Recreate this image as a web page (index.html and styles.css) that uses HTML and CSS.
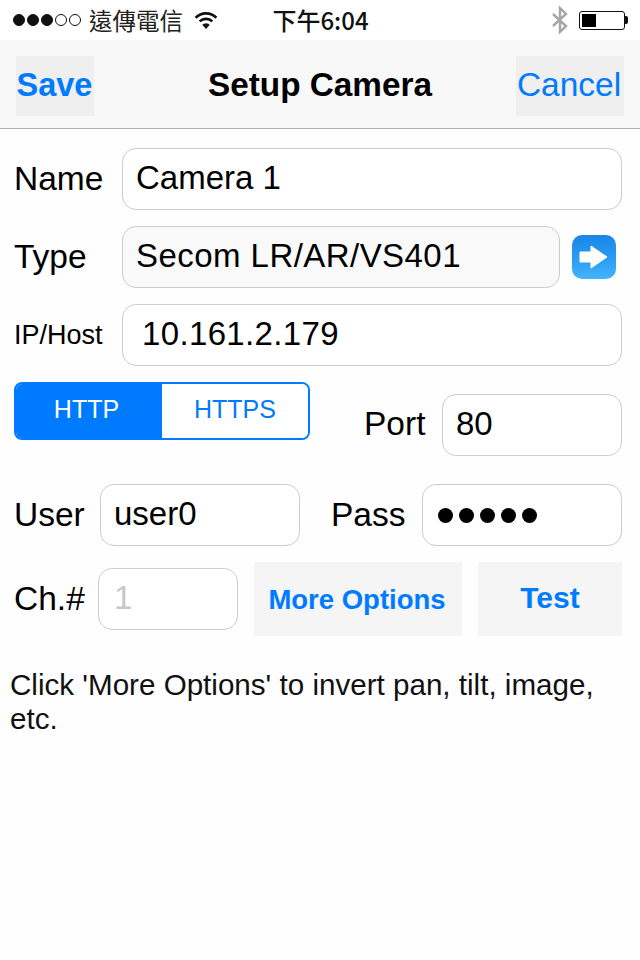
FILE: index.html
```html
<!DOCTYPE html>
<html lang="en">
<head>
    <meta charset="UTF-8">
    <meta name="viewport" content="width=device-width, initial-scale=1.0">
    <title>Setup Camera</title>
    <link rel="stylesheet" href="styles.css">
</head>
<body>
    <div class="status-bar">
        <div class="status-left">
            <span class="signal">
                <i class="dot on"></i><i class="dot on"></i><i class="dot on"></i><i class="dot"></i><i class="dot"></i>
            </span>
            <span class="carrier">遠傳電信</span>
            <svg class="wifi" width="24" height="18" viewBox="0 0 26 20">
                <path d="M1.5 7.5 A16 16 0 0 1 24.5 7.5" fill="none" stroke="#111" stroke-width="3"/>
                <path d="M6 11.5 A10 10 0 0 1 20 11.5" fill="none" stroke="#111" stroke-width="3"/>
                <path d="M13 20 L8.8 15.2 A6 6 0 0 1 17.2 15.2 Z" fill="#111"/>
            </svg>
        </div>
        <div class="status-time">下午6:04</div>
        <div class="status-right">
            <svg class="bluetooth" width="18" height="28" viewBox="0 0 18 28">
                <path d="M2 8 L15 20 L9 26 V2 L15 8 L2 20" fill="none" stroke="#a6a6a6" stroke-width="2.4"/>
            </svg>
            <div class="battery"><div class="battery-level"></div></div>
            <div class="battery-tip"></div>
        </div>
    </div>

    <div class="nav-bar">
        <div class="nav-side">
            <div class="nav-btn save">Save</div>
        </div>
        <div class="nav-title">Setup Camera</div>
        <div class="nav-side nav-side-right">
            <div class="nav-btn cancel">Cancel</div>
        </div>
    </div>

    <div class="form">
        <div class="row">
            <div class="label label-wide">Name</div>
            <div class="field grow">Camera 1</div>
        </div>
        <div class="row">
            <div class="label label-wide">Type</div>
            <div class="field type-field">Secom LR/AR/VS401</div>
            <svg class="go-icon" width="44" height="44" viewBox="0 0 44 44">
                <defs>
                    <linearGradient id="goBlue" x1="0" y1="0" x2="0" y2="1">
                        <stop offset="0" stop-color="#1a86e6"/>
                        <stop offset="0.55" stop-color="#2a9df4"/>
                        <stop offset="1" stop-color="#45b4fb"/>
                    </linearGradient>
                </defs>
                <rect width="44" height="44" rx="10" fill="url(#goBlue)"/>
                <path d="M8 17 H19 V11 L35 22 L19 33 V27 H8 Z" fill="#fff" stroke="#fff" stroke-width="1" stroke-linejoin="round"/>
            </svg>
        </div>
        <div class="row">
            <div class="label label-wide label-small">IP/Host</div>
            <div class="field grow ip-field">10.161.2.179</div>
        </div>
        <div class="row row-proto">
            <div class="segment">
                <div class="segment-item active">HTTP</div>
                <div class="segment-item">HTTPS</div>
            </div>
            <div class="label port-label">Port</div>
            <div class="field port-field">80</div>
        </div>
        <div class="row row-user">
            <div class="label user-label">User</div>
            <div class="field user-field">user0</div>
            <div class="label pass-label">Pass</div>
            <div class="field pass-field">
                <i class="pass-dot"></i><i class="pass-dot"></i><i class="pass-dot"></i><i class="pass-dot"></i><i class="pass-dot"></i>
            </div>
        </div>
        <div class="row row-channel">
            <div class="label ch-label">Ch.#</div>
            <div class="field ch-field">1</div>
            <div class="action more">More Options</div>
            <div class="action test">Test</div>
        </div>
    </div>

    <p class="note">Click 'More Options' to invert pan, tilt, image, etc.</p>
</body>
</html>
```

FILE: styles.css
```css
* {
    box-sizing: border-box;
}
body {
    margin: 0;
    width: 640px;
    height: 960px;
    overflow: hidden;
    font-family: "Liberation Sans", Arial, sans-serif;
    background-color: #fdfefd;
    color: #000;
}

/* status bar */
.status-bar {
    display: flex;
    align-items: center;
    height: 40px;
    background-color: #fff;
}
.status-left {
    flex: 1;
    display: flex;
    align-items: center;
    padding-left: 13px;
}
.signal {
    display: flex;
    gap: 2px;
}
.dot {
    width: 12px;
    height: 12px;
    border: 1px solid #111;
    border-radius: 50%;
}
.dot.on {
    background-color: #111;
}
.carrier {
    margin-left: 8px;
    font-family: "Noto Sans CJK TC", sans-serif;
    font-size: 23.5px;
    line-height: 30px;
    color: #222;
}
.wifi {
    margin-left: 11px;
}
.status-time {
    font-family: "Noto Sans CJK TC", "Liberation Sans", sans-serif;
    font-size: 24px;
    font-weight: 500;
    line-height: 30px;
    color: #111;
}
.status-right {
    flex: 1;
    display: flex;
    align-items: center;
    justify-content: flex-end;
    padding-right: 12px;
}
.bluetooth {
    margin-right: 10px;
}
.battery {
    width: 46px;
    height: 19px;
    padding: 2px;
    border: 1px solid #111;
    border-radius: 3px;
}
.battery-level {
    width: 14px;
    height: 100%;
    background-color: #000;
}
.battery-tip {
    width: 3px;
    height: 8px;
    background-color: #111;
    border-radius: 0 2px 2px 0;
}

/* nav bar */
.nav-bar {
    display: flex;
    align-items: center;
    height: 89px;
    padding: 4px 16px 0;
    background-color: #f8f8f8;
    border-bottom: 1px solid #b2b2b2;
}
.nav-side {
    flex: 1;
    display: flex;
}
.nav-side-right {
    justify-content: flex-end;
}
.nav-btn {
    display: flex;
    align-items: center;
    justify-content: center;
    height: 60px;
    padding-bottom: 2px;
    font-size: 33.5px;
    color: #007aff;
    background-color: #efefef;
}
.save {
    width: 78px;
    padding-right: 1px;
    font-weight: bold;
    font-size: 32.5px;
}
.cancel {
    width: 108px;
    padding-right: 2px;
}
.nav-title {
    padding-bottom: 2px;
    font-size: 33.3px;
    font-weight: bold;
}

/* form */
.form {
    display: flex;
    flex-direction: column;
    gap: 16px;
    padding: 19px 18px 0 14px;
}
.row {
    display: flex;
    align-items: center;
}
.label {
    font-size: 33.5px;
    line-height: 40px;
}
.label-wide {
    width: 108px;
}
.label-small {
    font-size: 27px;
}
.field {
    height: 62px;
    padding-left: 13px;
    border: 1px solid #ccc;
    border-radius: 14px;
    background-color: #fff;
    font-size: 33px;
    line-height: 58px;
}
.grow {
    flex: 1;
}
.type-field {
    width: 438px;
    letter-spacing: 0.45px;
    background-color: #f9f9f9;
}
.ip-field {
    padding-left: 19px;
    letter-spacing: 0.35px;
}
.go-icon {
    margin-left: 12px;
}

.row-proto {
    align-items: flex-start;
}
.segment {
    display: flex;
    width: 296px;
    height: 58px;
    border: 2px solid #007aff;
    border-radius: 8px;
    overflow: hidden;
}
.segment-item {
    flex: 1;
    text-align: center;
    font-size: 25px;
    line-height: 50px;
    color: #007aff;
    background-color: #fff;
}
.segment-item.active {
    flex: none;
    width: 146px;
    padding-right: 5px;
    color: #fff;
    background-color: #007aff;
}
.port-label {
    margin: 22px 0 0 54px;
    width: 78px;
}
.port-field {
    width: 180px;
    margin-top: 12px;
}

.row-user {
    margin-top: 12px;
}
.user-label {
    width: 86px;
}
.user-field {
    width: 200px;
}
.pass-label {
    width: 91px;
    margin-left: 31px;
}
.pass-field {
    display: flex;
    align-items: center;
    gap: 6px;
    width: 200px;
    padding-left: 15px;
}
.pass-dot {
    width: 15px;
    height: 15px;
    border-radius: 50%;
    background-color: #000;
}

.ch-label {
    width: 84px;
}
.ch-field {
    width: 140px;
    padding-left: 15px;
    color: #c7c7cd;
}
.action {
    height: 74px;
    font-weight: bold;
    text-align: center;
    color: #007aff;
    background-color: #f5f5f6;
}
.more {
    width: 208px;
    margin-left: 16px;
    padding-right: 2px;
    font-size: 27.5px;
    line-height: 75px;
}
.test {
    width: 144px;
    margin-left: 16px;
    font-size: 30px;
    line-height: 72px;
}

.note {
    margin: 32px 16px 0 10px;
    font-size: 29.6px;
    line-height: 34px;
    color: #111;
}
```
